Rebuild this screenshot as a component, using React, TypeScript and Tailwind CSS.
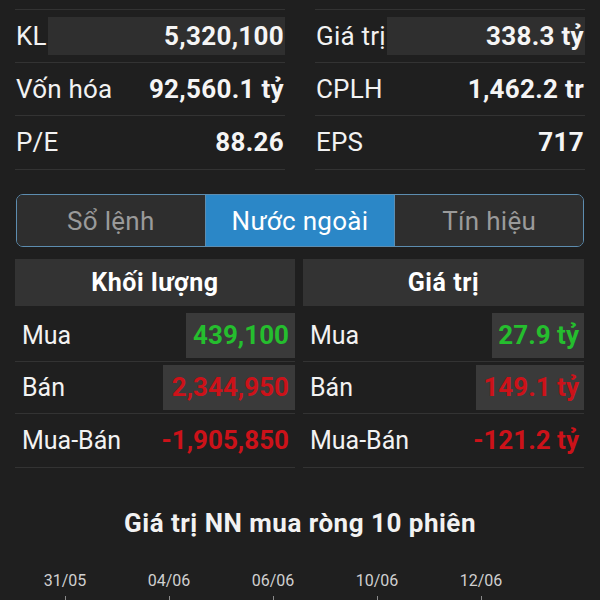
import React from "react";

const topLeft = [
  { label: "KL", value: "5,320,100", hl: true },
  { label: "Vốn hóa", value: "92,560.1 tỷ" },
  { label: "P/E", value: "88.26" },
];
const topRight = [
  { label: "Giá trị", value: "338.3 tỷ", hl: true },
  { label: "CPLH", value: "1,462.2 tr" },
  { label: "EPS", value: "717" },
];

function TopCol({ rows }: { rows: { label: string; value: string; hl?: boolean }[] }) {
  return (
    <div className="border-t border-[#333333]">
      {rows.map((r, i) => (
        <div
          key={i}
          className={`flex items-center border-b border-[#333333] ${i === 2 ? "h-[54px]" : "h-[53px]"}`}
        >
          <span className="pl-[1px] text-[26px] tracking-[0.2px] text-[#f2f2f2] whitespace-nowrap">{r.label}</span>
          <div
            className={`flex-1 h-[38px] flex items-center justify-end ${r.hl ? "bg-[#2f2f2f] ml-[1px]" : ""}`}
          >
            <span className="text-[26px] tracking-[0.3px] font-bold text-[#f5f5f5] whitespace-nowrap pr-[1px]">{r.value}</span>
          </div>
        </div>
      ))}
    </div>
  );
}

type Row = { label: string; value: string; color: string; box?: number };

function FlowCol({ title, rows, padR }: { title: string; rows: Row[]; padR: string }) {
  return (
    <div>
      <div className="h-[47px] bg-[#333333] flex items-center justify-center">
        <span className="text-[25px] tracking-[0.6px] font-bold text-white">{title}</span>
      </div>
      <div className="mt-[4px]">
        {rows.map((r, i) => (
          <div
            key={i}
            className={`flex items-center justify-between border-b border-[#333333] ${i === 2 ? "h-[54px]" : "h-[52px]"}`}
          >
            <span className="pl-[7px] text-[25px] text-[#f2f2f2] whitespace-nowrap">{r.label}</span>
            <div
              className={`h-[45px] flex items-center justify-end ${padR} ${r.box ? "bg-[#3a3a3a]" : ""}`}
              style={r.box ? { width: r.box } : undefined}
            >
              <span className="text-[26px] font-bold whitespace-nowrap" style={{ color: r.color }}>
                {r.value}
              </span>
            </div>
          </div>
        ))}
      </div>
    </div>
  );
}

const GREEN = "#25be2e";
const RED = "#cc1219";

export default function App() {
  const dates = ["31/05", "04/06", "06/06", "10/06", "12/06"];
  return (
    <div className="w-[600px] h-[600px] overflow-hidden bg-[#1f1f1f] font-['Roboto',sans-serif]">
      <div className="pt-[9px] px-[15px] grid grid-cols-2 gap-x-[30px]">
        <TopCol rows={topLeft} />
        <TopCol rows={topRight} />
      </div>

      <div className="mt-[24px] mx-[16px] h-[53px] rounded-[7px] border border-[#5d8db0] grid grid-cols-3 overflow-hidden">
        <div className="bg-[#2e2e2e] flex items-center justify-center border-r border-[#5d8db0] pt-[2px]">
          <span className="text-[26px] tracking-[0.3px] text-[#9a9a9a]">Sổ lệnh</span>
        </div>
        <div className="bg-[#2b87c7] flex items-center justify-center pt-[2px]">
          <span className="text-[26px] tracking-[0.3px] text-white">Nước ngoài</span>
        </div>
        <div className="bg-[#2e2e2e] flex items-center justify-center border-l border-[#5d8db0] pt-[2px]">
          <span className="text-[26px] tracking-[0.3px] text-[#9a9a9a]">Tín hiệu</span>
        </div>
      </div>

      <div className="mt-[12px] pl-[15px] pr-[16px] grid grid-cols-[280px_1fr] gap-x-[8px]">
        <FlowCol
          title="Khối lượng"
          padR="pr-[6px]"
          rows={[
            { label: "Mua", value: "439,100", color: GREEN, box: 109 },
            { label: "Bán", value: "2,344,950", color: RED, box: 132 },
            { label: "Mua-Bán", value: "-1,905,850", color: RED },
          ]}
        />
        <FlowCol
          title="Giá trị"
          padR="pr-[5px]"
          rows={[
            { label: "Mua", value: "27.9 tỷ", color: GREEN, box: 92 },
            { label: "Bán", value: "149.1 tỷ", color: RED, box: 108 },
            { label: "Mua-Bán", value: "-121.2 tỷ", color: RED },
          ]}
        />
      </div>

      <div className="mt-[40px] flex justify-center">
        <span className="text-[26px] tracking-[0.5px] font-bold text-[#f2f2f2] leading-[30px]">Giá trị NN mua ròng 10 phiên</span>
      </div>

      <div className="mt-[33px] pl-[13px] flex">
        {dates.map((d) => (
          <div key={d} className="w-[104px] flex flex-col items-center">
            <span className="text-[16px] text-[#d0d0d0] leading-[20px]">{d}</span>
            <div className="mt-[5px] w-px h-[6px] bg-[#8a8a8a]" />
          </div>
        ))}
      </div>
    </div>
  );
}
